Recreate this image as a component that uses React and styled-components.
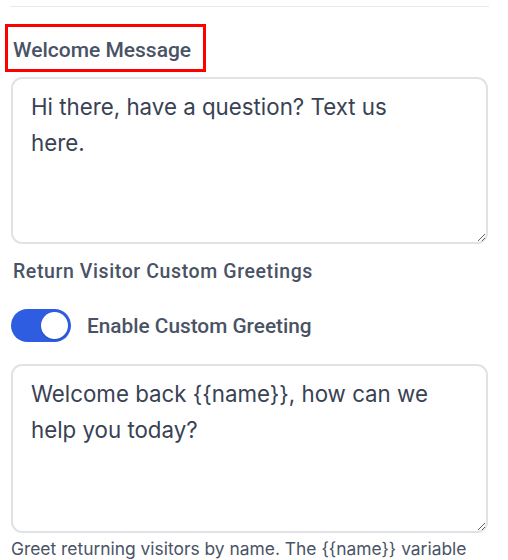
import React, { useState } from 'react';
import styled, { createGlobalStyle } from 'styled-components';

//STYLES
const GlobalStyle = createGlobalStyle`
    html, body {
        margin: 0;
        padding: 0;
        background: #ffffff;
    }
`;

const Page = styled.div`
    width: 508px;
    box-sizing: border-box;
    padding: 6px 20px 0 11px;
    display: flex;
    flex-direction: column;
    align-items: flex-start;
    font-family: Roboto, 'Liberation Sans', sans-serif;
`;

const Divider = styled.div`
    align-self: stretch;
    height: 1px;
    margin-left: -1px;
    margin-right: -1px;
    background-color: #e7e8ec;
`;

const Label = styled.label`
    display: inline-block;
    font-size: ${({ size }) => size || 18}px;
    letter-spacing: ${({ spacing }) => spacing || 0}px;
    font-weight: 500;
    line-height: 24px;
    color: #4a5365;
    margin-top: ${({ top }) => top || 0}px;
    margin-left: ${({ indent }) => indent || 0}px;
    ${({ highlighted }) =>
        highlighted &&
        `
        margin-left: -6px;
        border: 3px solid #ff0000;
        padding: 11px 12px 7px 5px;
    `}
`;

const TextArea = styled.textarea`
    display: block;
    align-self: stretch;
    box-sizing: border-box;
    height: ${({ rows }) => (rows ? rows : 167)}px;
    margin-top: ${({ top }) => top || 0}px;
    padding: 10px 48px 10px 18px;
    border: 2px solid #e1e2e7;
    border-radius: 11px;
    font-family: Inter, 'Noto Sans', sans-serif;
    font-size: 22.3px;
    line-height: 36px;
    color: #394254;
    background: #ffffff;
    resize: vertical;
    outline: none;
`;

const ToggleRow = styled.div`
    display: flex;
    align-items: center;
    gap: 16px;
    margin-top: 25px;
`;

const Switch = styled.button`
    position: relative;
    width: 60px;
    height: 33px;
    padding: 0;
    border: none;
    border-radius: 17px;
    background-color: ${({ on }) => (on ? '#2f5de2' : '#d1d5db')};
    cursor: pointer;
`;

const Knob = styled.span`
    position: absolute;
    top: 3px;
    left: ${({ on }) => (on ? '30px' : '3px')};
    width: 27px;
    height: 27px;
    border-radius: 50%;
    background-color: #ffffff;
    box-shadow: 0 1px 2px rgba(0, 0, 0, 0.2);
    transition: left 0.15s;
`;

const Helper = styled.p`
    align-self: stretch;
    margin: 4px 0 0;
    font-family: Inter, 'Noto Sans', sans-serif;
    font-size: 17.4px;
    line-height: 24px;
    color: #4a5365;
`;

const App = () => {
    //State
    const [welcome, setWelcome] = useState('Hi there, have a question? Text us here.');
    const [greeting, setGreeting] = useState('Welcome back {{name}}, how can we help you today?');
    const [enabled, setEnabled] = useState(true);

    return (
        <>
            <GlobalStyle />
            <Page>
                <Divider />
                <Label highlighted size={21} top={17}>
                    Welcome Message
                </Label>
                <TextArea top={5} value={welcome} onChange={(e) => setWelcome(e.target.value)} />
                <Label size={19.5} spacing={0.6} top={16} indent={2}>
                    Return Visitor Custom Greetings
                </Label>
                <ToggleRow>
                    <Switch on={enabled ? 1 : 0} onClick={() => setEnabled(!enabled)}>
                        <Knob on={enabled ? 1 : 0} />
                    </Switch>
                    <Label size={20.8}>Enable Custom Greeting</Label>
                </ToggleRow>
                <TextArea
                    top={22}
                    rows={169}
                    value={greeting}
                    onChange={(e) => setGreeting(e.target.value)}
                />
                <Helper>Greet returning visitors by name. The {'{{name}}'} variable will be replaced.</Helper>
            </Page>
        </>
    );
};

export default App;
